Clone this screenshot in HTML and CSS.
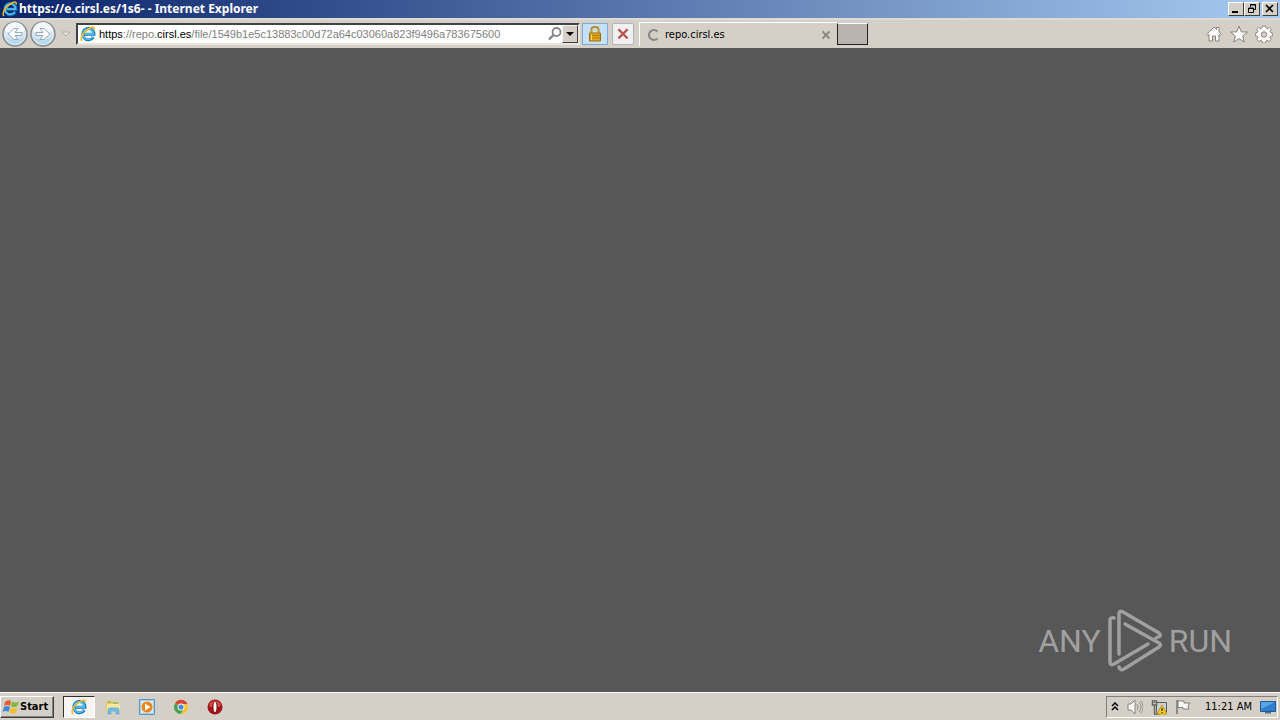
FILE: index.html
```html
<!DOCTYPE html>
<html lang="en">
<head>
<meta charset="utf-8">
<title>https://e.cirsl.es/1s6- - Internet Explorer</title>
<link rel="stylesheet" href="styles.css">
</head>
<body>
<svg class="defs" aria-hidden="true">
  <symbol id="ie" viewBox="0 0 16 16">
    <path d="M13.200 11A5.600 5.600 0 1 1 14 8.300H4.500" fill="none" stroke="#1679bf" stroke-width="3"/>
    <path d="M12.900 10.500A5.300 5.300 0 1 1 13.500 8H5" fill="none" stroke="#63c5f2" stroke-width="1.500"/>
    <path d="M2 15C-1 12 4 5 10 2c3-1.600 5-1 4 1.500" fill="none" stroke="#eebc22" stroke-width="1.500"/>
  </symbol>
</svg>
<header class="titlebar">
  <svg class="icon"><use href="#ie"/></svg>
  <h1 class="title">https://e.cirsl.es/1s6- - Internet Explorer</h1>
  <div class="window-buttons">
    <button class="win" aria-label="Minimize"><svg viewBox="0 0 14 12"><path d="M3 9h6" stroke="#000" stroke-width="2"/></svg></button>
    <button class="win" aria-label="Restore"><svg viewBox="0 0 14 12"><path d="M5.500 4V1.500h5v5H9M5 2h6M3.500 5h5v4.500h-5zM3 5.500h6" fill="none" stroke="#000"/></svg></button>
    <button class="win close" aria-label="Close"><svg viewBox="0 0 14 12"><path d="M3 2l7 7M10 2L3 9" stroke="#000" stroke-width="1.600"/></svg></button>
  </div>
</header>
<nav class="toolbar">
  <div class="history">
    <button class="plain" aria-label="Back"><svg class="round" viewBox="0 0 26 26"><circle cx="13" cy="13" r="12" fill="#d9e6ef" stroke="#858b92" stroke-width="1.500"/><path d="M3 10a10 9 0 0 1 20 0q-10 5-20 0z" fill="#f6f9fb"/><path d="M4 16q9 5 18 0-2 7-9 7t-9-7" fill="#b6dcec"/><path d="M20 11.500h-7l3-4h-4l-6 5.500 6 5.500h4l-3-4h7z" fill="#fff" stroke="#91aac0"/></svg></button>
    <button class="plain" aria-label="Forward"><svg class="round" viewBox="0 0 26 26"><circle cx="13" cy="13" r="12" fill="#d9e6ef" stroke="#858b92" stroke-width="1.500"/><path d="M3 10a10 9 0 0 1 20 0q-10 5-20 0z" fill="#f6f9fb"/><path d="M4 16q9 5 18 0-2 7-9 7t-9-7" fill="#b6dcec"/><path d="M6 11.500h7l-3-4h4l6 5.500-6 5.500h-4l3-4H6z" fill="#fff" stroke="#91aac0"/></svg></button>
  </div>
  <button class="plain recent" aria-label="Recent pages"><svg viewBox="0 0 10 6"><path d="M1 1h8L5 5z" fill="#e4e0da" stroke="#b5afa8"/></svg></button>
  <div class="address">
    <svg class="icon"><use href="#ie"/></svg>
    <div class="url" role="textbox" aria-label="Address" contenteditable="true" spellcheck="false"><b>https</b>://repo.<b>cirsl.es</b>/file/1549b1e5c13883c00d72a64c03060a823f9496a783675600</div>
    <button class="plain" aria-label="Search"><svg class="icon" viewBox="0 0 16 16"><circle cx="10.500" cy="6" r="4" fill="none" stroke="#858585" stroke-width="1.800"/><path d="M7.500 9L3 13.500" stroke="#858585" stroke-width="2.400"/></svg></button>
    <button class="dropdown" aria-label="Show addresses"><svg viewBox="0 0 8 4"><path d="M0 0h8L4 4z"/></svg></button>
  </div>
  <button class="tool lock" aria-label="Security report"><svg class="icon" viewBox="0 0 16 16"><path d="M4.500 8V4q0-3 3.500-3t3.500 3v4" fill="none" stroke="#a98220" stroke-width="2"/><path d="M5 7V4q0-2 3-2t3 2v3" fill="none" stroke="#e9cf72" stroke-width=".8"/><path d="M2.500 7h11v8h-11z" fill="#e1a817" stroke="#9b7012"/><path d="M3 9.500h10M3 12h10" stroke="#b27d10"/><path d="M4.500 8v6" stroke="#f8d664"/></svg></button>
  <button class="tool stop" aria-label="Stop"><svg class="icon" viewBox="0 0 16 16"><path d="M3.500 3.500l9 9M12.500 3.500l-9 9" stroke="#8d8888" stroke-width="2.400"/><path d="M3.500 3l9 9M12.500 3l-9 9" stroke="#cf4940" stroke-width="1.600"/></svg></button>
  <div class="tab">
    <svg class="spinner" viewBox="0 0 14 14"><path d="M11.500 3.500A5 5 0 1 0 11.500 10.500" fill="none" stroke="#888" stroke-width="2.200"/></svg>
    <span class="tab-title">repo.cirsl.es</span>
    <button class="plain tab-close" aria-label="Close tab"><svg viewBox="0 0 10 10"><path d="M1.500 1.500l7 7M8.500 1.500l-7 7" stroke="#8a8580" stroke-width="1.800"/></svg></button>
  </div>
  <button class="new-tab" aria-label="New tab"></button>
  <div class="actions">
    <button class="plain" aria-label="Home"><svg viewBox="0 0 18 18"><path d="M1.500 9.500L9 2l2.500 2.500V2.500H14v4.500l2.500 2.500-1 1L14 9.500V16h-3.500v-5h-3v5H4V9.500l-1.500 1z" fill="#fff" stroke="#88837f"/></svg></button>
    <button class="plain" aria-label="Favorites"><svg viewBox="0 0 18 18"><path d="M9 1l2.200 5.800 6.300.3-4.900 3.900 1.700 6L9 13.600 3.700 17l1.700-6L.5 7.100l6.300-.3z" fill="#fff" stroke="#88837f"/></svg></button>
    <button class="plain" aria-label="Tools"><svg viewBox="0 0 18 18"><path d="M7.500 1h3l.5 2 1.300.6 1.900-1.100 2 2-1.100 1.900.6 1.300 2 .5v2.600l-2 .5-.6 1.300 1.100 1.900-2 2-1.900-1.100-1.300.6-.5 2h-3l-.5-2-1.300-.6-1.900 1.100-2-2 1.100-1.900-.6-1.300-2-.5V8.200l2-.5.6-1.300-1.100-1.900 2-2 1.900 1.100L7 3z" fill="#fff" stroke="#88837f"/><circle cx="9" cy="9.500" r="2.700" fill="#d4d0c8" stroke="#88837f"/></svg></button>
  </div>
</nav>
<main class="page">
  <div class="watermark">
    <span>ANY</span>
    <svg class="play" viewBox="79 9 56 64"><path d="M91 54V14q0-4 4-2l36 21q3 3-1 4l-2 1M86 18q-4-1-4 2v42q0 4 4 2l34-20M97 24l34 19q3 2 0 4L96 69q-4 2-5-2" fill="none" stroke="#a0a0a0" stroke-width="3.500" stroke-linecap="round" stroke-linejoin="round"/></svg>
    <span>RUN</span>
  </div>
</main>
<footer class="taskbar">
  <button class="start"><svg viewBox="0 0 18 16"><path d="M3 3q3-3 6-1L8 7Q5 5 2 7z" fill="#e7602c"/><path d="M10 2.500q3 2 7 0L15.500 7q-3 2-6.500.5z" fill="#84b83c"/><path d="M2 8q3-2 6 0l-1.500 5q-3-2-6 0z" fill="#438bd0"/><path d="M9 8.500q3 2 6.500 0L14 13.500q-3 2-6.500 0z" fill="#f4bd2d"/></svg>Start</button>
  <div class="apps">
    <button class="app active" aria-label="Internet Explorer"><svg class="icon"><use href="#ie"/></svg></button>
    <button class="app" aria-label="Explorer"><svg class="icon" viewBox="0 0 16 16"><path d="M1 3l1-1h4l1 1h7v9H1z" fill="#e8c960"/><path d="M2 5h13v7H2z" fill="#f8e8a1"/><path d="M3 3h3M8 4h5" stroke="#69ad67"/><path d="M3 15v-4q0-2 2-2h7q2 0 2 2v4h-3v-3H6v3z" fill="#76bfe6" stroke="#519ac4" stroke-width=".6"/></svg></button>
    <button class="app" aria-label="Media Player"><svg class="icon" viewBox="0 0 16 16"><path d="M.5.500h15v15H.5z" fill="#a9cce8" stroke="#5b96c7"/><path d="M2 2h12v12H2z" fill="#d9ebf6"/><circle cx="8" cy="8" r="5.500" fill="#ef8514"/><path d="M6 4.500v7L11.500 8z" fill="#fff"/></svg></button>
    <button class="app" aria-label="Chrome"><svg class="icon" viewBox="0 0 16 16"><circle cx="8" cy="8" r="7" fill="#f2c52e"/><path d="M8 8L2 4.400A7 7 0 0 1 14.500 5H8z" fill="#d94436"/><path d="M8 8L2 4.400A7 7 0 0 0 7.500 15L11 9.500z" fill="#43a15a"/><circle cx="8" cy="8" r="3.500" fill="#fff"/><circle cx="8" cy="8" r="2.600" fill="#478bd8"/></svg></button>
    <button class="app" aria-label="Opera"><svg class="icon" viewBox="0 0 16 16"><circle cx="8" cy="8" r="7.500" fill="#9f1519"/><path d="M2 5q6-7 12 0l-1 3H3z" fill="#cf4c4b"/><ellipse cx="8" cy="8" rx="2.800" ry="5.500" fill="#811013"/><ellipse cx="8" cy="8" rx="1.500" ry="5" fill="#fff"/></svg></button>
  </div>
  <div class="tray">
    <button class="plain chevrons" aria-label="Show hidden icons"><svg viewBox="0 0 8 10"><path d="M1 4l3-3 3 3M1 8l3-3 3 3" fill="none" stroke="#000" stroke-width="1.500"/></svg></button>
    <svg class="icon" viewBox="0 0 16 16"><path d="M1 5h3l4-4v14l-4-4H1z" fill="#f7f7f5" stroke="#88847d"/><path d="M10 5q2 3 0 6M12 3q4 5 0 10M14 1.500q4 6.500 0 13" fill="none" stroke="#99958e"/></svg>
    <svg class="icon" viewBox="0 0 16 16"><path d="M5.500 3.500h10v10h-10z" fill="#c7d0d5" stroke="#5c5c58"/><path d="M1.500 1v5h4V1M3.500 6v9h5M3.500 1v3" fill="none" stroke="#66645f" stroke-width="1.500"/><path d="M11 6l5 9H6z" fill="#f5cc22" stroke="#c49a10"/><path d="M11 9v3M11 13v1" stroke="#000"/></svg>
    <svg class="icon" viewBox="0 0 16 16"><path d="M2 1v14" stroke="#77736d" stroke-width="1.500"/><path d="M3 2h6v2h6l-2 3 1 3H8V8.500H3z" fill="#fafaf8" stroke="#817d76"/></svg>
    <time class="clock">11:21 AM</time>
    <button class="plain" aria-label="Show desktop"><svg class="icon" viewBox="0 0 16 16"><path d="M.5 2.500h15v10H.5z" fill="#2e7fd0" stroke="#225995"/><path d="M1 3h14L1 10z" fill="#5ba4e5"/><path d="M5 13h6v1.500H5z" fill="#5b6d7c"/></svg></button>
  </div>
</footer>
</body>
</html>
```
FILE: styles.css
```css
* { box-sizing: border-box; }
body {
  margin: 0;
  min-height: 100vh;
  display: flex;
  flex-direction: column;
  background: #d4d0c8;
  color: #000;
  font: 11px/14px "DejaVu Sans Condensed", "DejaVu Sans", sans-serif;
}
button { font: inherit; color: inherit; padding: 0; margin: 0; }
svg { display: block; flex: none; }
.defs { position: absolute; width: 0; height: 0; }
.icon { width: 16px; height: 16px; }
.plain { border: 0; background: none; display: flex; align-items: center; justify-content: center; }
.titlebar {
  display: flex;
  align-items: center;
  gap: 1px;
  height: 18px;
  padding: 0 2px;
  background: linear-gradient(90deg, #0a246a, #a6caf0);
}
.title {
  flex: 1;
  margin: 0;
  color: #fff;
  font: bold 12px/16px "Noto Sans", sans-serif;
}
.window-buttons { display: flex; }
.win {
  width: 16px;
  height: 14px;
  background: #d4d0c8;
  border: 1px solid;
  border-color: #fff #404040 #404040 #fff;
}
.win svg { width: 14px; height: 12px; }
.close { margin-left: 2px; }
.toolbar {
  display: flex;
  align-items: center;
  height: 30px;
  border-top: 2px solid #dedad4;
  padding-right: 7px;
}
.history { display: flex; gap: 2px; padding-left: 2px; }
.round { width: 26px; height: 26px; }
.recent { width: 20px; }
.recent svg { width: 10px; height: 6px; }
.address {
  display: flex;
  align-items: center;
  flex: 0 1 504px;
  min-width: 0;
  height: 22px;
  padding-left: 2px;
  background: #fff;
  border: 2px solid;
  border-color: #444048 #e8e4df #e8e4df #444048;
}
.url {
  flex: 1;
  min-width: 0;
  overflow: hidden;
  white-space: nowrap;
  padding-left: 3px;
  color: #808080;
  font-family: "Liberation Sans", sans-serif;
}
.url b { font-weight: normal; color: #000; }
.dropdown {
  width: 16px;
  height: 18px;
  display: flex;
  align-items: center;
  justify-content: center;
  background: #d4d0c8;
  border: 1px solid;
  border-color: #f5f3ef #404040 #404040 #f5f3ef;
}
.dropdown svg { width: 8px; height: 4px; }
.tool { display: flex; align-items: center; justify-content: center; height: 22px; }
.lock { width: 26px; margin-left: 2px; background: #c7e0fa; border: 1px solid #7fabd9; }
.stop { width: 22px; margin-left: 4px; background: #f3f0f0; border: 1px solid #b0b5bd; border-radius: 2px; }
.tab {
  display: flex;
  align-items: center;
  flex: 0 1 198px;
  height: 24px;
  margin-left: 5px;
  padding: 0 6px;
  border-top: 1px solid #fff;
  border-left: 1px solid #fff;
}
.spinner { width: 14px; height: 14px; }
.tab-title { flex: 1; padding-left: 5px; }
.tab-close svg { width: 10px; height: 10px; }
.new-tab {
  width: 31px;
  height: 22px;
  background: #bbb3ad;
  border: 1px solid #222;
  border-top-color: #fff;
}
.actions { display: flex; gap: 7px; margin-left: auto; }
.actions svg { width: 18px; height: 18px; }
.page {
  flex: 1;
  display: flex;
  align-items: flex-end;
  justify-content: flex-end;
  padding: 19px 48px;
  background: #575757;
}
.watermark {
  display: flex;
  align-items: center;
  gap: 6px;
  color: #a0a0a0;
  font: 32px/64px Roboto, sans-serif;
}
.play { width: 56px; height: 64px; }
.taskbar {
  display: flex;
  align-items: center;
  height: 28px;
  padding-right: 2px;
  border-top: 1px solid #fff;
}
.start {
  display: flex;
  align-items: center;
  width: 54px;
  height: 22px;
  padding-left: 1px;
  background: #d4d0c8;
  border: 1px solid;
  border-color: #fff #404040 #404040 #fff;
  box-shadow: inset -1px -1px #808080;
  font-weight: bold;
}
.start svg { width: 18px; height: 16px; }
.apps { display: flex; gap: 2px; padding-left: 9px; }
.app {
  width: 32px;
  height: 22px;
  display: flex;
  align-items: center;
  justify-content: center;
  background: none;
  border: 1px solid transparent;
}
.active { background: #f7f5f2; border-color: #303030 #fff #fff #303030; }
.tray {
  display: flex;
  align-items: center;
  gap: 8px;
  height: 22px;
  margin-left: auto;
  padding: 0 1px 0 4px;
  border: 1px solid;
  border-color: #808080 #fff #fff #808080;
}
.chevrons svg { width: 8px; height: 10px; }
.clock { padding-left: 6px; }
```
